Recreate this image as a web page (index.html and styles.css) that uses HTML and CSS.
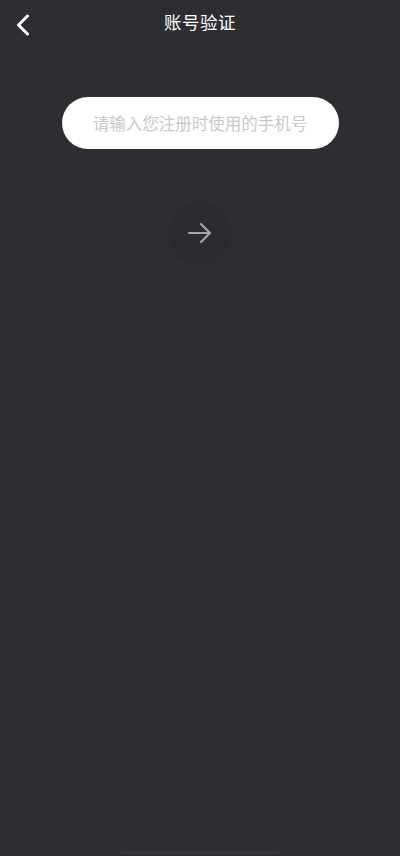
FILE: index.html
```html
<!DOCTYPE html>
<html lang="zh">
<head>
<meta charset="utf-8">
<link rel="stylesheet" href="styles.css">
</head>
<body>
<div class="screen">
  <header class="nav">
    <span class="back">
      <svg width="14" height="22" viewBox="0 0 14 22"><path d="M11.5 2 L2.5 11 L11.5 20" fill="none" stroke="#fff" stroke-width="3" stroke-linecap="round" stroke-linejoin="round"/></svg>
    </span>
    <h1 class="title">账号验证</h1>
  </header>
  <main class="content">
    <div class="field">
      <input class="phone" type="text" placeholder="请输入您注册时使用的手机号">
    </div>
    <button class="next" type="button">
      <svg width="28" height="28" viewBox="0 0 28 28"><path d="M3 14 H24 M15 5 L24 14 L15 23" fill="none" stroke="#a6a6a8" stroke-width="2.2" stroke-linecap="round" stroke-linejoin="round"/></svg>
    </button>
  </main>
  <div class="home-indicator"></div>
</div>
</body>
</html>
```
FILE: styles.css
```css
html, body {
  margin: 0;
  padding: 0;
  background: #2d2e32;
}
body {
  font-family: "Noto Sans CJK SC", "Noto Sans", sans-serif;
}
.screen {
  width: 400px;
  height: 856px;
  display: flex;
  flex-direction: column;
  position: relative;
  overflow: hidden;
}
.nav {
  height: 46px;
  display: flex;
  align-items: center;
  justify-content: center;
  position: relative;
}
.back {
  position: absolute;
  left: 16px;
  top: 14px;
  width: 14px;
  height: 22px;
  display: flex;
}
.title {
  margin: 0;
  color: #ffffff;
  font-size: 17.5px;
  font-weight: 400;
  line-height: 1;
  letter-spacing: 0.5px;
  padding-bottom: 2px;
}
.content {
  display: flex;
  flex-direction: column;
  align-items: center;
  padding-top: 51px;
}
.field {
  width: 277px;
  height: 52px;
  background: #ffffff;
  border-radius: 26px;
  display: flex;
  align-items: center;
  justify-content: center;
}
.phone {
  width: 100%;
  border: none;
  outline: none;
  background: transparent;
  text-align: center;
  font-family: "Noto Sans CJK SC", sans-serif;
  font-size: 16.5px;
  color: #333;
  padding: 0;
}
.phone::placeholder {
  color: #c8c8c9;
}
.next {
  margin-top: 52px;
  width: 64px;
  height: 64px;
  border-radius: 50%;
  border: none;
  background: #2a2b2f;
  display: flex;
  align-items: center;
  justify-content: center;
  padding: 0;
}
.home-indicator {
  position: absolute;
  left: 120px;
  bottom: 2px;
  width: 160px;
  height: 3px;
  border-radius: 2px;
  background: #36373b;
}
```
